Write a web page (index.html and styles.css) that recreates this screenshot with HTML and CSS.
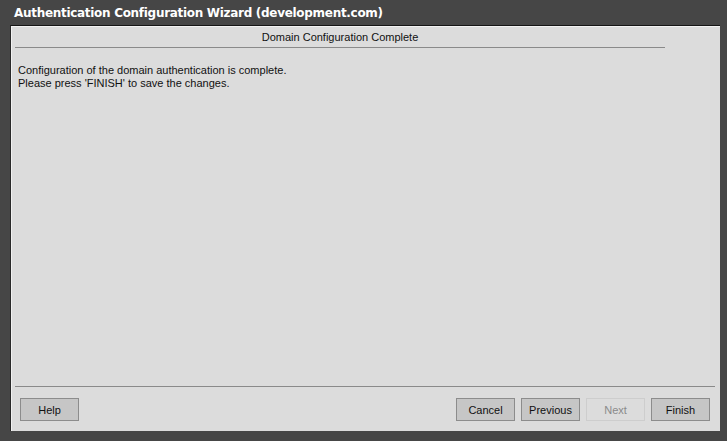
FILE: index.html
```html
<!DOCTYPE html>
<html lang="en">
<head>
    <meta charset="UTF-8">
    <title>Authentication Configuration Wizard</title>
    <link rel="stylesheet" href="styles.css">
</head>
<body>
    <div class="window">
        <div class="title">Authentication Configuration Wizard (development.com)</div>
        <div class="panel">
            <div class="step-header">Domain Configuration Complete</div>
            <div class="message">
                <p>Configuration of the domain authentication is complete.</p>
                <p>Please press 'FINISH' to save the changes.</p>
            </div>
            <div class="footer">
                <button class="btn">Help</button>
                <div class="spacer"></div>
                <button class="btn">Cancel</button>
                <button class="btn">Previous</button>
                <button class="btn disabled">Next</button>
                <button class="btn">Finish</button>
            </div>
        </div>
    </div>
</body>
</html>
```

FILE: styles.css
```css
body {
    margin: 0;
    padding: 0;
    background-color: #464646;
    font-family: "Liberation Sans", Arial, sans-serif;
    font-size: 11px;
    color: #111;
}
.window {
    width: 727px;
    height: 441px;
    display: flex;
    flex-direction: column;
    box-sizing: border-box;
    padding: 0 7px 10px 10px;
}
.title {
    height: 25px;
    line-height: 27px;
    padding-left: 4px;
    color: #fff;
    font-family: "DejaVu Sans", Verdana, sans-serif;
    font-weight: bold;
    font-size: 12px;
    letter-spacing: -0.3px;
}
.panel {
    flex: 1;
    display: flex;
    flex-direction: column;
    background-color: #dcdcdc;
    border-top: 1px solid #151515;
    border-left: 1px solid #2a2a2a;
    box-shadow: inset 1px 1px 0 #f2f2f2;
    padding: 0 5px 0 4px;
}
.step-header {
    width: 650px;
    height: 21px;
    line-height: 22px;
    text-align: center;
    border-bottom: 1px solid #8a8a8a;
}
.message {
    flex: 1;
    padding: 16px 3px 0;
    line-height: 13px;
}
.message p {
    margin: 0;
}
.footer {
    display: flex;
    gap: 6px;
    border-top: 1px solid #8a8a8a;
    padding: 11px 5px 10px 5px;
}
.spacer {
    flex: 1;
}
.btn {
    width: 59px;
    height: 23px;
    padding: 0;
    font-family: "Liberation Sans", Arial, sans-serif;
    font-size: 11px;
    color: #111;
    background-color: #c6c6c6;
    border: 1px solid #8c8c8c;
    border-radius: 0;
}
.btn.disabled {
    background-color: #dcdcdc;
    border-color: #cdcdcd;
    color: #8a8a8a;
}
```
